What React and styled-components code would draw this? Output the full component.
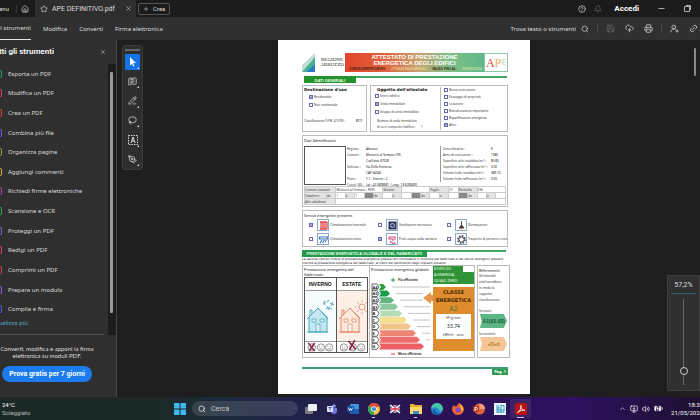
import React from "react";
import styled, { createGlobalStyle, css } from "styled-components";
// Icons
import {
  House,
  Star,
  X,
  Plus,
  Search,
  Save,
  CloudUpload,
  Printer,
  CircleQuestionMark,
  Bell,
  Minus,
  Link2,
  UserRoundPlus,
  MessageSquareText,
  PencilLine,
  Lasso,
  PenTool,
  ChevronUp,
  Volume2,
  MonitorDown,
  BatteryCharging,
} from "lucide-react";

const tools = [
  ["Esporta un PDF", "#1f9e7a"],
  ["Modifica un PDF", "#d8437c"],
  ["Crea un PDF", "#e0444c"],
  ["Combina più file", "#6a63f0"],
  ["Organizza pagine", "#8fa646"],
  ["Aggiungi commenti", "#e0b020"],
  ["Richiedi firme elettroniche", "#b8449e"],
  ["Scansione e OCR", "#2fa84f"],
  ["Proteggi un PDF", "#7a62e0"],
  ["Redigi un PDF", "#e03f74"],
  ["Comprimi un PDF", "#d8435c"],
  ["Prepara un modulo", "#8a5fd8"],
  ["Compila e firma", "#5a5ae8"],
];

const general = [
  ["Intero edificio", false],
  ["Unità immobiliare", true],
  ["Gruppo di unità immobiliari", false],
];

const reasons = [
  ["Nuova costruzione", false],
  ["Passaggio di proprietà", false],
  ["Locazione", false],
  ["Ristrutturazione importante", false],
  ["Riqualificazione energetica", false],
  ["Altro:", true],
];

const place = [
  ["Regione :", "Abruzzo"],
  ["Comune :", "Montorio al Vomano (TE)"],
  ["", "Cod.Istat: 67028"],
  ["Indirizzo :", "Via Della Fonterva"],
  ["", "CAP 64046"],
  ["Piano :", "T-1 - Interno : 2"],
  ["Coord. GIS :", "Lat : 42.5828681 ; Long : 13.6280490"],
];

const building = [
  ["Zona climatica :", "E"],
  ["Anno di costruzione :", "1980"],
  ["Superficie utile riscaldata (m²) :", "85.83"],
  ["Superficie utile raffrescata (m²) :", "0.00"],
  ["Volume lordo riscaldato (m³) :", "383.10"],
  ["Volume lordo raffrescato (m³) :", "0.00"],
];

const services = [
  ["Climatizzazione invernale", true, "radiator"],
  ["Ventilazione meccanica", false, "fan"],
  ["Illuminazione", false, "lamp"],
  ["Climatizzazione estiva", false, "cooler"],
  ["Prod. acqua calda sanitaria", true, "tap"],
  ["Trasporto di persone o cose", false, "gear"],
];

const classes = [
  ["A4", 14, "#2f9f3f"],
  ["A3", 18, "#159c4a"],
  ["A2", 22, "#63b582"],
  ["A1", 26, "#8cc8a0"],
  ["B", 30, "#b4dcb6"],
  ["C", 35, "#f6df8c"],
  ["D", 39, "#f3c48c"],
  ["E", 44, "#ee8676"],
  ["F", 48, "#ee6c6e"],
  ["G", 52, "#ee5f66"],
];

const ServiceIcon = ({ kind }) => (
  <svg width="11" height="11" viewBox="0 0 11 11" fill="none">
    {kind === "radiator" && (
      <path d="M2 2h7M2 9h7M3 2v7M5 2v7M7 2v7M9 2v7" stroke="#e0434b" strokeWidth="1.3" />
    )}
    {kind === "fan" && (
      <>
        <rect x="2" y="2" width="7" height="7" fill="#3b4570" stroke="#1e2848" />
        <circle cx="5.5" cy="5.5" r="2" stroke="#c6cde4" strokeWidth=".8" />
      </>
    )}
    {kind === "lamp" && (
      <>
        <path d="M5.5 1v4M3 8l2.5-3L8 8z" stroke="#333" fill="#333" strokeWidth=".8" />
        <circle cx="5.5" cy="8.5" r="1" fill="#d86a50" />
      </>
    )}
    {kind === "cooler" && (
      <path d="M1.5 3h8v2h-8zM2 9l2-3M4.5 9l2-3M7 8l1.5-2" stroke="#3877b8" strokeWidth="1.1" />
    )}
    {kind === "tap" && (
      <path d="M2 3h6v3M2 3v2h4v2M5 8a1.5 1.5 0 1 0 3 0M3 7l1 2" stroke="#d8457c" strokeWidth="1.1" />
    )}
    {kind === "gear" && (
      <>
        <circle cx="5.5" cy="5.5" r="3.6" stroke="#4a4f58" strokeWidth="1.8" strokeDasharray="1.6 1.2" />
        <circle cx="5.5" cy="5.5" r="2.6" stroke="#4a4f58" />
      </>
    )}
  </svg>
);

const HouseDrawing = ({ color, fill, winter }) => (
  <svg width="32" height="50" viewBox="0 0 32 50" fill="none" stroke={color}>
    <path d="M4 41V26l9-9 9 9v15z" fill={fill} />
    <path d="M2 28l11-11 10 11M5 25v-6h2v4" />
    <path d="M7 28h4v3H7zM15 28h4v3h-4zM11 33h4v8h-4z" strokeWidth=".8" fill="#fff" fillOpacity=".5" />
    <path d="M2 41h21" />
    {winter ? (
      <path
        d="M18 13l3-2M19 10l1 4M21 18l4-2M22 15l2 4M25 12l4 2M28 11l-2 4M22 11l2-2M24 17l3 1"
        strokeWidth="1.2"
        stroke="#7fb6c4"
      />
    ) : (
      <>
        <circle cx="25" cy="16" r="3" strokeWidth=".8" />
        <path
          d="M25 9v2M25 21v2M18 16h2M30 16h2M20 11l2 2M28 19l2 2M30 11l-2 2M20 21l2-2"
          strokeWidth=".7"
        />
      </>
    )}
  </svg>
);

const Faces = ({ cross }) => (
  <svg width="32" height="11" viewBox="0 0 32 11" fill="none" stroke="#555" strokeWidth=".7">
    {[6, 16, 25].map((x) => (
      <g key={x}>
        <circle cx={x} cy="6" r="4" fill="#fff" />
        <path d={`M${x - 2} 5h1M${x + 1} 5h1M${x - 2} 8q2-1 4 0`} />
      </g>
    ))}
    <path
      d={cross === 0 ? "M2 1l7 9M9 1l-6 9" : "M11-1l8 9M18-2l-6 11"}
      stroke="#8e1c38"
      strokeWidth="1.6"
    />
  </svg>
);

const EnergyScale = () => (
  <svg width="62" height="68" viewBox="0 0 62 68">
    {classes.map(([name, end, color], i) => {
      const y = 1 + i * 6.6;
      return (
        <g key={name}>
          <path d={`M1 ${y}h5l2 3-2 3H1z`} fill="#fff" stroke="#444" strokeWidth=".8" />
          <text x="1.5" y={y + 4.7} fontSize="4" fontWeight="700" fill="#222">
            {name}
          </text>
          <path d={`M8 ${y}H${end - 2}l3 3-3 3H8l2-3z`} fill={color} />
          {end < 50 && (
            <path d={`M${end + 7} ${y + 3}H${i === 1 || i === 2 ? 52 : 59}`} stroke="#999" strokeWidth=".6" />
          )}
        </g>
      );
    })}
    <path d="M62 12h-2V9l-8 6 8 6v-3h2z" fill="#e8974f" />
  </svg>
);

const RegionLogo = () => (
  <svg width="17" height="19" viewBox="0 0 17 19">
    <path d="M0 19V12L13 0v6z" fill="#c5ddd8" />
    <path d="M0 19L13 4v8L4 19z" fill="#48b292" />
    <path d="M4 19l9-8v8z" fill="#2b7bc8" />
  </svg>
);

const TaskIcon = ({ kind }) => (
  <svg width="12" height="12" viewBox="0 0 12 12">
    {kind === "views" && (
      <>
        <rect x="0" y="4" width="8" height="7" rx="1" fill="#777b86" />
        <rect x="3" y="1" width="9" height="7" rx="1" fill="#eceef2" />
      </>
    )}
    {kind === "teams" && (
      <>
        <circle cx="8" cy="3" r="1.8" fill="#8a8ff0" />
        <path d="M5 5h6v3a3 3 0 0 1-6 0z" fill="#7176dc" />
        <rect x="1" y="3" width="6" height="6" rx="1" fill="#dfe2fa" />
        <path d="M2.5 4.5h3M4 4.5v3" stroke="#4b50b0" />
      </>
    )}
    {kind === "word" && (
      <>
        <rect x="3" y="1" width="9" height="10" rx="1" fill="#3d96e0" />
        <path d="M3 6h9v4a1 1 0 0 1-1 1H3z" fill="#1c5fb4" />
        <rect x="0" y="3" width="7" height="6" rx="1" fill="#174e9c" />
        <path d="M1.5 4.5l1 3 1-2 1 2 1-3" stroke="#fff" strokeWidth=".8" fill="none" />
      </>
    )}
    {kind === "chrome" && (
      <>
        <circle cx="6" cy="6" r="6" fill="#f2c230" />
        <path d="M6 6L.8 3A6 6 0 0 1 11.2 3z" fill="#e2463a" />
        <path d="M6 6L.8 3A6 6 0 0 0 6 12z" fill="#35a853" />
        <circle cx="6" cy="6" r="2.8" fill="#fff" />
        <circle cx="6" cy="6" r="2.1" fill="#3f80ea" />
      </>
    )}
    {kind === "flag" && (
      <>
        <rect x="1" y="2" width="10" height="8" fill="#28387c" />
        <path d="M1 2l10 8M11 2L1 10" stroke="#fff" strokeWidth="1.5" />
        <path d="M6 2v8M1 6h10" stroke="#fff" strokeWidth="2.6" />
        <path d="M6 2v8M1 6h10" stroke="#d03048" strokeWidth="1.3" />
      </>
    )}
    {kind === "folder" && (
      <>
        <path d="M0 1h4l1 1h7v9H0z" fill="#e9ad2e" />
        <path d="M0 4h12v7H0z" fill="#fbd868" />
        <path d="M3 8h6v3H3z" fill="#3a87cc" />
      </>
    )}
    {kind === "edge" && (
      <>
        <circle cx="6" cy="6" r="6" fill="#2585d0" />
        <path d="M0 6a6 6 0 0 1 12 0c0 2-3 3-4 1 0-3-5-4-8-1z" fill="#44c7a4" />
        <path d="M4 7c0 3 3 4 6 3-3 3-8 1-8-2 0-1 1-2 2-1z" fill="#164f9a" />
      </>
    )}
    {kind === "firefox" && (
      <>
        <path d="M6 12a6 6 0 0 1-5.5-8L2 2l2 2 3-4c4 2 5 5 5 6a6 6 0 0 1-6 6z" fill="#f0642f" />
        <path d="M8 1c3 3 4 5 2 8 0-3-2-5-2-8z" fill="#fbc83c" />
        <circle cx="6" cy="7" r="2.5" fill="#8247c8" />
      </>
    )}
    {kind === "powerpoint" && (
      <>
        <circle cx="6.5" cy="6" r="5.5" fill="#e0663e" />
        <path d="M6.5 .5A5.5 5.5 0 0 1 12 6H6.5z" fill="#f39a78" />
        <rect x="0" y="3" width="6" height="6" rx="1" fill="#b93d1e" />
        <path d="M2 8V4.5h1.5a1 1 0 0 1 0 2H2" stroke="#fff" strokeWidth=".8" fill="none" />
      </>
    )}
    {kind === "sheet" && (
      <>
        <path d="M0 0h12v12H0z" fill="#e8f6fb" />
        <path d="M2 3h3M2 5h4M2 7h8M2 9h8M4 4v6M7 2v8M7 2.5h3v7" stroke="#3a9cc0" fill="none" />
      </>
    )}
    {kind === "acrobat" && (
      <>
        <rect width="12" height="12" rx="2" fill="#b81414" />
        <path
          d="M2.5 9.5c2-1 4-4 3.5-7-1 2 2 5 4 5-2-1-5 0-7.5 2z"
          fill="none"
          stroke="#fff"
          strokeWidth=".9"
        />
      </>
    )}
  </svg>
);

const Check = ({ label, checked }) => (
  <CheckLabel>
    <Box type="checkbox" defaultChecked={checked} />
    {label}
  </CheckLabel>
);

const Header = () => (
  <>
    <TitleBar>
      <MenuButton>Menu</MenuButton>
      <HomeButton aria-label="Home">
        <House size={8} />
      </HomeButton>
      <FileTab>
        <Star size={8} />
        <span>APE DEFINITIVO.pdf</span>
        <IconButton aria-label="Chiudi scheda">
          <X size={7} />
        </IconButton>
      </FileTab>
      <CreateButton>
        <Plus size={6} />
        Crea
      </CreateButton>
      <WindowTools>
        <IconButton aria-label="Guida">
          <CircleQuestionMark size={8} />
        </IconButton>
        <IconButton aria-label="Notifiche" $dim>
          <Bell size={8} />
        </IconButton>
        <SignIn>Accedi</SignIn>
        <IconButton aria-label="Riduci">
          <Minus size={9} />
        </IconButton>
        <IconButton aria-label="Ripristina">
          <svg width="7" height="7" viewBox="0 0 7 7" fill="none" stroke="currentColor">
            <path d="M.5 1.5h5v5h-5zM2 .5h4.5V5" strokeWidth=".8" />
          </svg>
        </IconButton>
      </WindowTools>
    </TitleBar>
    <Toolbar>
      <Nav>
        <NavLink href="#strumenti" $active>
          Tutti gli strumenti
        </NavLink>
        <NavLink href="#modifica">Modifica</NavLink>
        <NavLink href="#converti">Converti</NavLink>
        <NavLink href="#firma">Firma elettronica</NavLink>
      </Nav>
      <FindButton>
        Trova testo o strumenti
        <Search size={8} />
      </FindButton>
      <Separator />
      <IconButton aria-label="Salva" $dim>
        <Save size={9} />
      </IconButton>
      <IconButton aria-label="Carica">
        <CloudUpload size={9} />
      </IconButton>
      <IconButton aria-label="Stampa">
        <Printer size={9} />
      </IconButton>
      <Separator />
      <IconButton aria-label="Invita">
        <UserRoundPlus size={9} />
      </IconButton>
      <IconButton aria-label="Collegamento">
        <Link2 size={9} transform="rotate(-45)" />
      </IconButton>
    </Toolbar>
  </>
);

const Sidebar = () => (
  <Panel>
    <PanelHeader>
      <PanelTitle>Tutti gli strumenti</PanelTitle>
      <IconButton aria-label="Chiudi">
        <X size={6} />
      </IconButton>
    </PanelHeader>
    <PanelBody>
      <ToolColumn>
        <ToolList>
          {tools.map(([name, color]) => (
            <ToolItem key={name}>
              <ToolButton>
                <ToolMark $color={color} />
                {name}
              </ToolButton>
            </ToolItem>
          ))}
        </ToolList>
        <MoreLink href="#altro">Visualizza più</MoreLink>
      </ToolColumn>
      <PanelTrack>
        <PanelThumb />
      </PanelTrack>
    </PanelBody>
    <PanelFooter>
      <p>
        Converti, modifica e apponi la firma
        <br />
        elettronica su moduli PDF.
      </p>
      <TrialButton>Prova gratis per 7 giorni</TrialButton>
    </PanelFooter>
  </Panel>
);

const QuickTools = () => (
  <QuickBar>
    <Handle />
    <QuickButton aria-label="Seleziona" $active>
      <svg width="10" height="10" viewBox="0 0 10 10" fill="#fff">
        <path d="M2 0l6 6-3 .2L6.5 9l-1.3.6L4 6.8 2 8.5z" />
      </svg>
    </QuickButton>
    <QuickButton aria-label="Commenta">
      <MessageSquareText size={9} />
    </QuickButton>
    <QuickButton aria-label="Disegna">
      <PencilLine size={9} />
    </QuickButton>
    <QuickButton aria-label="Forma">
      <Lasso size={9} />
    </QuickButton>
    <QuickButton aria-label="Testo">
      <svg width="10" height="10" viewBox="0 0 10 10" fill="none" stroke="currentColor">
        <rect x=".5" y=".5" width="9" height="9" strokeDasharray="1.5 1" />
        <path d="M3 8l2-6 2 6M3.7 6h2.6" />
      </svg>
    </QuickButton>
    <QuickButton aria-label="Firma">
      <PenTool size={9} />
    </QuickButton>
  </QuickBar>
);

const Certificate = () => (
  <Sheet>
    <DocHeader>
      <RegionLogo />
      <Region>
        REGIONE
        <br />
        ABRUZZO
      </Region>
      <Banner>
        <h1>
          ATTESTATO DI PRESTAZIONE
          <br />
          ENERGETICA DEGLI EDIFICI
        </h1>
        <BannerCodes>
          <b>CODICE IDENTIFICATIVO:</b>
          <span>2700413000385052</span>
          <b>VALIDO FINO AL:</b>
          <span>16/05/2034</span>
        </BannerCodes>
      </Banner>
      <ApeLogo>
        <i>A</i>
        <i>P</i>
        <i>E</i>
      </ApeLogo>
    </DocHeader>
    <GreenRule $inset>
      <GreenTitle $short>DATI GENERALI</GreenTitle>
    </GreenRule>
    <GeneralRow>
      <Card>
        <Heading>Destinazione d'uso</Heading>
        <UseList>
          <Check label="Residenziale" checked />
          <Check label="Non residenziale" />
        </UseList>
        <Classification>
          <span>Classificazione D.P.R. 412/93 :</span>
          <b>E1.1</b>
        </Classification>
      </Card>
      <Card $split>
        <ObjectColumn>
          <Heading>Oggetto dell'attestato</Heading>
          {general.map(([label, on]) => (
            <Check key={label} label={label} checked={on} />
          ))}
          <Units>
            Numero di unità immobiliari
            <br />
            di cui è composto l'edificio : &nbsp; &nbsp; &nbsp; 1
          </Units>
        </ObjectColumn>
        <ReasonColumn>
          {reasons.map(([label, on]) => (
            <Check key={label} label={label} checked={on} />
          ))}
        </ReasonColumn>
      </Card>
    </GeneralRow>
    <Identity>
      <Heading $light>Dati Identificativi</Heading>
      <IdentityRow>
        <Photo />
        <Facts>
          {place.map(([name, value]) => (
            <React.Fragment key={value}>
              <dt>{name}</dt>
              <dd>{value}</dd>
            </React.Fragment>
          ))}
        </Facts>
        <Facts $right>
          {building.map(([name, value]) => (
            <React.Fragment key={name}>
              <dt>{name}</dt>
              <dd>{value}</dd>
            </React.Fragment>
          ))}
        </Facts>
      </IdentityRow>
      <Cadastre>
        <colgroup>
          <FirstCol />
          <col span={19} />
        </colgroup>
        <tbody>
          <tr>
            <th colSpan={2}>Comune catastale</th>
            <td colSpan={5}>Montorio al Vomano - F690</td>
            <th colSpan={2}>Sezione</th>
            <td colSpan={3} />
            <th colSpan={2}>Foglio</th>
            <td>27</td>
            <th colSpan={2}>Particella</th>
            <td colSpan={3}>136</td>
          </tr>
          <tr>
            <th>Subalterni</th>
            {["da", "1", "a", "1", null, "da", "", "a", "", null, "da", "", "a", "", null, "da", "", "a", ""].map(
              (cell, i) =>
                cell === "da" || cell === "a" ? (
                  <th key={i}>{cell}</th>
                ) : (
                  <Cell key={i} $dark={cell === null}>
                    {cell}
                  </Cell>
                )
            )}
          </tr>
          <tr>
            <th colSpan={2}>Altri subalterni</th>
            <td colSpan={18} />
          </tr>
        </tbody>
      </Cadastre>
    </Identity>
    <Services>
      <Heading $light>Servizi energetici presenti</Heading>
      <ServiceGrid>
        {services.map(([label, on, kind]) => (
          <ServiceLabel key={label}>
            <Box type="checkbox" defaultChecked={on} />
            <ServiceBadge>
              <ServiceIcon kind={kind} />
            </ServiceBadge>
            {label}
          </ServiceLabel>
        ))}
      </ServiceGrid>
    </Services>
    <GreenRule>
      <GreenTitle>PRESTAZIONE ENERGETICA GLOBALE E DEL FABBRICATO</GreenTitle>
    </GreenRule>
    <Intro>
      La sezione riporta l'indice di prestazione energetica globale non rinnovabile in funzione del
      fabbricato e dei servizi energetici presenti,
      <br />
      nonché la prestazione energetica del fabbricato, al netto del rendimento degli impianti
      presenti.
    </Intro>
    <Performance>
      <Building>
        <Heading $light>
          Prestazione energetica del
          <br />
          fabbricato
        </Heading>
        <Seasons>
          <Season>
            <h3>INVERNO</h3>
            <HouseDrawing color="#4fa9bd" fill="#c4e6f0" winter />
            <Faces cross={0} />
          </Season>
          <Season $summer>
            <h3>ESTATE</h3>
            <HouseDrawing color="#e08a70" fill="#fde8dc" />
            <Faces cross={1} />
          </Season>
        </Seasons>
      </Building>
      <Global>
        <ScaleColumn>
          <Heading $light>Prestazione energetica globale</Heading>
          <Efficiency>
            <Plus size={6} color="#2b9a50" strokeWidth={4} />
            Più efficiente
          </Efficiency>
          <EnergyScale />
          <Efficiency>
            <Minus size={6} color="#e0434b" strokeWidth={4} />
            Meno efficiente
          </Efficiency>
        </ScaleColumn>
        <ClassColumn>
          <NearZero>
            <span>
              EDIFICIO
              <br />A ENERGIA
              <br />
              QUASI ZERO
            </span>
            <ZeroBox />
          </NearZero>
          <ClassBox>
            <ClassName>
              CLASSE
              <br />
              ENERGETICA
            </ClassName>
            <Grade>A2</Grade>
            <Value>
              <span>EP gl,nren</span>
              <b>33.74</b>
              <span>kWh/m² &nbsp; anno</span>
            </Value>
          </ClassBox>
        </ClassColumn>
      </Global>
      <References>
        <Heading $light>Riferimenti</Heading>
        <p>
          Gli immobili
          <br />
          simili avrebbero
          <br />
          in media la
          <br />
          seguente
          <br />
          classificazione:
        </p>
        <span>Se nuovi:</span>
        <RefTag $color="#5cb585">A1(93.93)</RefTag>
        <span>Se esistenti:</span>
        <RefTag $color="#f5c69a" $orange>
          «D»d
        </RefTag>
      </References>
    </Performance>
    <DocFooter>
      <PageNumber>Pag. 1</PageNumber>
    </DocFooter>
  </Sheet>
);

const Taskbar = () => (
  <Bar>
    <Weather>
      24°C
      <br />
      <span>Soleggiato</span>
    </Weather>
    <Apps>
      <StartButton aria-label="Start">
        <svg width="12" height="12" viewBox="0 0 12 12" fill="#3fb8ee">
          <path d="M0 0h5.5v5.5H0zM6.5 0H12v5.5H6.5zM0 6.5h5.5V12H0zM6.5 6.5H12V12H6.5z" />
        </svg>
      </StartButton>
      <SearchBox>
        <Search size={8} />
        <input type="text" placeholder="Cerca" aria-label="Cerca" />
      </SearchBox>
      {[
        "views",
        "teams",
        "word",
        "chrome",
        "flag",
        "folder",
        "edge",
        "firefox",
        "powerpoint",
        "sheet",
        "acrobat",
      ].map((kind) => (
        <AppButton
          key={kind}
          aria-label={kind}
          $running={kind === "chrome" || kind === "folder"}
          $current={kind === "acrobat"}
        >
          <TaskIcon kind={kind} />
        </AppButton>
      ))}
    </Apps>
    <Tray>
      <ChevronUp size={7} />
      <MonitorDown size={8} />
      <Volume2 size={8} />
      <BatteryCharging size={9} fill="#fff" />
      <Clock>
        18:32
        <br />
        21/05/2024
      </Clock>
    </Tray>
  </Bar>
);

const App = () => {
  return (
    <Window>
      <GlobalStyle />
      <Header />
      <Main>
        <Sidebar />
        <Viewer>
          <QuickTools />
          <Certificate />
          <ViewerTrack>
            <ViewerThumb />
          </ViewerTrack>
          <ZoomPanel>
            <output htmlFor="zoom">57,2%</output>
            <ZoomSlider id="zoom" type="range" min="0" max="100" defaultValue="13" aria-label="Zoom" />
          </ZoomPanel>
        </Viewer>
      </Main>
      <Taskbar />
    </Window>
  );
};

const GlobalStyle = createGlobalStyle`
  * {
    margin: 0;
    padding: 0;
    box-sizing: border-box;
  }
  body {
    background: #1e1e1e;
    font-family: Roboto, "Liberation Sans", sans-serif;
    font-size: 7px;
    line-height: 8px;
    color: #dcdcdc;
  }
  button, input {
    font: inherit;
    color: inherit;
    border: none;
    background: none;
  }
  a {
    color: inherit;
    text-decoration: none;
  }
  svg {
    display: block;
    flex-shrink: 0;
  }
`;

const Window = styled.div`
  display: flex;
  flex-direction: column;
  height: 100vh;
  overflow: hidden;
`;

// Title bar
const TitleBar = styled.header`
  display: flex;
  align-items: center;
  height: 17px;
  background: #1b1b1b;
`;

const MenuButton = styled.button`
  display: flex;
  justify-content: flex-end;
  width: 9px;
  overflow: hidden;
  font-size: 6px;
`;

const HomeButton = styled.button`
  display: flex;
  margin-left: 7px;
  padding: 0 6px 0 4px;
  border-left: 1px solid #333;
`;

const FileTab = styled.div`
  display: flex;
  align-items: center;
  gap: 4px;
  width: 101px;
  height: 17px;
  padding: 0 4px 0 5px;
  background: #2e2e2e;
  white-space: nowrap;
  span {
    flex: 1;
  }
`;

const CreateButton = styled.button`
  display: flex;
  align-items: center;
  gap: 4px;
  height: 12px;
  margin-left: 2px;
  padding: 0 4px;
  border: 1px solid #555;
  border-radius: 2px;
  font-size: 6px;
`;

const IconButton = styled.button`
  display: flex;
  align-items: center;
  justify-content: center;
  color: ${(props) => (props.$dim ? "#666" : "#d6d6d6")};
`;

const WindowTools = styled.div`
  display: flex;
  align-items: center;
  gap: 8px;
  margin-left: auto;
  padding-right: 9px;
  ${IconButton}:nth-of-type(n + 4) {
    margin-left: 10px;
  }
`;

const SignIn = styled.button`
  margin-left: 4px;
  font-size: 8px;
  font-weight: 700;
  color: #fff;
`;

// Toolbar
const Toolbar = styled.div`
  display: flex;
  align-items: center;
  gap: 10px;
  height: 23px;
  padding-right: 2px;
  background: #303030;
  font-family: "Noto Sans", sans-serif;
  font-size: 6px;
`;

const Nav = styled.nav`
  display: flex;
  align-self: stretch;
  gap: 12px;
  margin-right: auto;
`;

const NavLink = styled.a`
  display: flex;
  align-items: center;
  white-space: nowrap;
  ${(props) =>
    props.$active &&
    css`
      justify-content: flex-end;
      width: 31px;
      overflow: hidden;
      border-bottom: 1px solid #e6e6e6;
    `}
`;

const FindButton = styled.button`
  display: flex;
  align-items: center;
  gap: 5px;
`;

const Separator = styled.span`
  width: 1px;
  height: 8px;
  margin: 0 -2px;
  background: #4a4a4a;
`;

const Main = styled.main`
  display: flex;
  flex: 1;
  min-height: 0;
`;

// Tool panel
const Panel = styled.aside`
  display: flex;
  flex-direction: column;
  width: 117px;
  background: #2f2f2f;
  border-right: 1px solid #484848;
`;

const PanelHeader = styled.div`
  display: flex;
  align-items: center;
  justify-content: space-between;
  height: 24px;
  padding-right: 10px;
`;

const PanelTitle = styled.h2`
  display: flex;
  justify-content: flex-end;
  width: 54px;
  overflow: hidden;
  font-size: 8px;
  line-height: 10px;
  white-space: nowrap;
  color: #f2f2f2;
`;

const PanelBody = styled.div`
  display: flex;
  flex: 1;
  gap: 4px;
  min-height: 0;
  font-family: "Noto Sans", sans-serif;
  font-size: 6px;
`;

const ToolColumn = styled.div`
  display: flex;
  flex: 1;
  flex-direction: column;
  padding-bottom: 7px;
  border-bottom: 1px solid #555;
`;

const ToolList = styled.ul`
  display: flex;
  flex: 1;
  flex-direction: column;
  list-style: none;
`;

const ToolItem = styled.li`
  display: flex;
  flex: 1;
  align-items: center;
`;

const ToolButton = styled.button`
  display: flex;
  align-items: center;
  gap: 6px;
  white-space: nowrap;
`;

const ToolMark = styled.span`
  width: 2px;
  height: 8px;
  border: 1px solid ${(props) => props.$color};
  border-left: none;
  border-radius: 0 2px 2px 0;
`;

const MoreLink = styled.a`
  display: flex;
  justify-content: flex-end;
  width: 28px;
  overflow: hidden;
  white-space: nowrap;
  color: #5cb4cf;
`;

const PanelTrack = styled.div`
  width: 8px;
  padding: 8px 3px 22px 2px;
  background: #1c1c1c;
`;

const PanelThumb = styled.div`
  height: 100%;
  border-radius: 1px;
  background: #9a9a9a;
`;

const PanelFooter = styled.div`
  display: flex;
  flex-direction: column;
  align-items: center;
  gap: 7px;
  height: 62px;
  padding: 10px 22px 0 0;
  p {
    font-family: Lato, sans-serif;
    font-size: 6px;
    line-height: 7px;
    text-align: center;
    white-space: nowrap;
  }
`;

const TrialButton = styled.button`
  height: 16px;
  padding: 0 7px;
  border-radius: 8px;
  background: #1d7bf0;
  font-weight: 700;
  white-space: nowrap;
  color: #fff;
`;

// Viewer
const Viewer = styled.section`
  position: relative;
  display: flex;
  flex: 1;
  justify-content: center;
  min-width: 0;
  padding-bottom: 3px;
  background: #1e1e1e;
`;

const QuickBar = styled.div`
  position: absolute;
  top: 5px;
  left: 5px;
  display: flex;
  flex-direction: column;
  align-items: center;
  width: 21px;
  height: 125px;
  padding: 3px 0 0;
  border: 1px solid #3c3c3c;
  border-radius: 3px;
  background: #2e2e2e;
`;

const Handle = styled.span`
  width: 15px;
  height: 2px;
  margin-bottom: 1px;
  background: #666;
`;

const QuickButton = styled.button`
  position: relative;
  display: flex;
  flex: 1;
  align-items: center;
  justify-content: center;
  width: 15px;
  color: #d6d6d6;
  background: ${(props) =>
    props.$active
      ? "linear-gradient(#1473e6, #1473e6) center / 15px 16px no-repeat"
      : "none"};
  &::after {
    content: "";
    position: absolute;
    right: 1px;
    bottom: 3px;
    border: 1px solid #e6e6e6;
    border-top-color: transparent;
    border-left-color: transparent;
  }
`;

const ViewerTrack = styled.div`
  width: 9px;
  margin-left: auto;
  padding: 8px 4px 0 3px;
`;

const ViewerThumb = styled.div`
  height: 28px;
  border-radius: 1px;
  background: #8a8a8a;
`;

const ZoomPanel = styled.div`
  position: absolute;
  right: 0;
  bottom: 6px;
  display: flex;
  flex-direction: column;
  align-items: center;
  width: 33px;
  height: 116px;
  padding-top: 5px;
  border: 1px solid #3e3e3e;
  background: #303030;
  output {
    width: 25px;
    padding-bottom: 4px;
    border-bottom: 1px solid #2f5f78;
    text-align: center;
  }
`;

const ZoomSlider = styled.input`
  flex: 1;
  width: 9px;
  min-height: 0;
  margin: 5px 0;
  appearance: none;
  writing-mode: vertical-lr;
  direction: rtl;
  background: linear-gradient(#6a6a6a, #6a6a6a) center / 1px 100% no-repeat;
  &::-webkit-slider-thumb {
    appearance: none;
    width: 8px;
    height: 8px;
    border: 1px solid #d0d0d0;
    border-radius: 50%;
    background: #303030;
  }
`;

// Certificate
const Sheet = styled.article`
  flex: 0 1 252px;
  min-width: 0;
  margin-left: auto;
  padding: 13px 22px 0 24px;
  background: #fff;
  font-family: "Noto Sans", sans-serif;
  font-size: 3px;
  line-height: 4px;
  color: #333;
`;

const DocHeader = styled.header`
  display: flex;
  height: 19px;
`;

const Region = styled.p`
  flex: 1;
  padding-top: 4px;
  font-family: "Liberation Serif", serif;
  font-size: 5px;
  line-height: 5px;
  text-align: center;
  color: #222;
`;

const Banner = styled.div`
  width: 139px;
  background: linear-gradient(90deg, #e2452c 0, #e0603c 28%, #c9a070 52%, #7fbf86 75%, #5fb98a 100%);
  text-align: center;
  h1 {
    padding-top: 1px;
    font-family: "Liberation Sans", sans-serif;
    font-size: 6px;
    line-height: 6px;
    white-space: nowrap;
    color: #fff;
  }
`;

const BannerCodes = styled.p`
  display: flex;
  justify-content: space-between;
  padding: 1px 2px 0 4px;
  font-family: "Liberation Sans", sans-serif;
  font-size: 4px;
  line-height: 4px;
  white-space: nowrap;
  b {
    font-size: 3px;
    color: #3c1c10;
  }
  span {
    color: #f6f0a8;
  }
`;

const ApeLogo = styled.p`
  display: flex;
  justify-content: center;
  width: 24px;
  border: 1px solid #8cc8a4;
  font-family: "Liberation Serif", serif;
  font-size: 12px;
  line-height: 18px;
  i {
    font-style: normal;
    color: #d8503c;
  }
  i:nth-child(2) {
    color: #e8b070;
  }
  i:nth-child(3) {
    font-size: 8px;
    color: #b4d890;
  }
`;

const GreenRule = styled.div`
  height: 7px;
  margin: ${(props) => (props.$inset ? "4px 1px 2px 2px" : "3px 2px 0 0")};
  background: linear-gradient(#3fa465, #3fa465) top / 100% 2px no-repeat;
`;

const GreenTitle = styled.h2`
  width: ${(props) => (props.$short ? "52px" : "125px")};
  padding-top: ${(props) => (props.$short ? "2px" : "1px")};
  background: ${(props) => (props.$short ? "#25932c" : "#22994c")};
  font-family: "Liberation Sans", sans-serif;
  font-size: 4px;
  line-height: 5px;
  height: 7px;
  text-align: center;
  white-space: nowrap;
  color: #e6ffe6;
`;

const GeneralRow = styled.div`
  display: flex;
  gap: 3px;
  min-height: 46px;
`;

const Card = styled.section`
  border: 1px solid #bbb;
  padding: 1px;
  ${(props) =>
    props.$split
      ? css`
          display: flex;
          flex: 1;
        `
      : css`
          display: flex;
          flex-direction: column;
          width: 65px;
        `}
`;

const Heading = styled.h3`
  font-family: ${(props) => (props.$light ? '"Noto Sans"' : '"DejaVu Sans"')}, sans-serif;
  font-size: 4px;
  font-weight: ${(props) => (props.$light ? 400 : 700)};
  line-height: 5px;
  white-space: nowrap;
  color: #111;
`;

const CheckLabel = styled.label`
  display: flex;
  align-items: center;
  gap: 1px;
  white-space: nowrap;
`;

const Box = styled.input`
  flex-shrink: 0;
  width: 4px;
  height: 4px;
  appearance: none;
  border: 1px solid #6a6ab0;
  &:checked {
    background: #a4a4d0;
  }
`;

const UseList = styled.div`
  display: flex;
  flex-direction: column;
  gap: 4px;
  padding: 3px 0 0 5px;
`;

const Classification = styled.p`
  display: flex;
  justify-content: space-between;
  margin-top: auto;
  padding: 0 3px 7px 0;
`;

const ObjectColumn = styled.div`
  display: flex;
  flex-direction: column;
  gap: 4px;
  width: 69px;
  padding-left: 3px;
  border-right: 1px solid #bbb;
  ${Heading} {
    margin: 0 0 -2px 2px;
  }
`;

const Units = styled.p`
  padding-left: 2px;
  line-height: 6px;
  white-space: nowrap;
`;

const ReasonColumn = styled.div`
  display: flex;
  flex-direction: column;
  gap: 3px;
  padding: 1px 0 0 3px;
`;

const Identity = styled.section`
  min-height: 72px;
  margin-top: 3px;
  padding: 2px 1px 0;
  border: 1px solid #bbb;
`;

const IdentityRow = styled.div`
  display: flex;
  padding: 3px 0 1px;
`;

const Photo = styled.div`
  width: 42px;
  height: 39px;
  margin-right: 1px;
  border: 1px solid #555;
`;

const Facts = styled.dl`
  display: grid;
  grid-template-columns: ${(props) => (props.$right ? "48px 1fr" : "19px 1fr")};
  grid-auto-rows: 6px;
  align-content: start;
  white-space: nowrap;
  ${(props) =>
    props.$right
      ? css`
          flex: 1;
          height: 36px;
          padding-left: 2px;
          border-left: 1px solid #999;
        `
      : css`
          width: 93px;
          height: 39px;
        `}
  dt, dd {
    padding-top: 1px;
  }
  dd {
    color: #111;
  }
`;

const Cadastre = styled.table`
  width: 100%;
  table-layout: fixed;
  border-collapse: collapse;
  th, td {
    height: 6px;
    border: 1px solid #ccc;
    font-weight: 400;
    line-height: 4px;
    text-align: left;
    white-space: nowrap;
  }
  th {
    background: #e4e4e4;
  }
`;

const FirstCol = styled.col`
  width: 22px;
`;

const Cell = styled.td`
  background: ${(props) => (props.$dark ? "#888" : "none")};
`;

const Services = styled.section`
  min-height: 37px;
  margin-top: 3px;
  padding: 2px 1px 0;
  border: 1px solid #bbb;
`;

const ServiceGrid = styled.div`
  display: grid;
  grid-template-columns: 69px 69px 1fr;
  row-gap: 2px;
  padding: 1px 0 0 5px;
`;

const ServiceLabel = styled.label`
  display: flex;
  align-items: center;
  gap: 1px;
  white-space: nowrap;
  ${Box} {
    margin-right: 3px;
  }
`;

const ServiceBadge = styled.span`
  display: flex;
  align-items: center;
  justify-content: center;
  width: 12px;
  height: 12px;
  border: 1px solid #8ea6cc;
  overflow: hidden;
`;

const Intro = styled.p`
  font-family: "DejaVu Sans", sans-serif;
  white-space: nowrap;
  color: #111;
`;

const Performance = styled.section`
  display: flex;
  min-height: 93px;
  margin-right: -2px;
`;

const Building = styled.div`
  width: 68px;
  padding: 1px 1px 3px;
  border: 1px solid #bbb;
`;

const Seasons = styled.div`
  display: flex;
  border: 1px solid #555;
`;

const Season = styled.div`
  flex: 1;
  min-width: 0;
  overflow: hidden;
  background: ${(props) => (props.$summer ? "#fdeee6" : "#f6fbfd")};
  & + & {
    border-left: 1px solid #555;
  }
  h3 {
    height: 13px;
    border-bottom: 1px solid #999;
    background: #fff;
    font-family: "Liberation Sans", sans-serif;
    font-size: 5px;
    line-height: 13px;
    text-align: center;
    color: #111;
  }
  svg:last-child {
    overflow: visible;
    background: #fff;
    border-top: 1px solid #999;
  }
`;

const Global = styled.div`
  display: flex;
  width: 105px;
  border: 1px solid #bbb;
  border-left: none;
`;

const ScaleColumn = styled.div`
  display: flex;
  flex: 1;
  flex-direction: column;
  padding: 1px 0 0 1px;
  ${Heading} {
    margin-bottom: 5px;
  }
`;

const Efficiency = styled.p`
  display: flex;
  align-items: center;
  gap: 2px;
  height: 6px;
  padding-left: 19px;
  font-weight: 700;
  white-space: nowrap;
`;

const ClassColumn = styled.div`
  width: 41px;
`;

const NearZero = styled.div`
  display: flex;
  justify-content: space-between;
  align-items: flex-start;
  height: 18px;
  margin-bottom: 3px;
  padding-left: 1px;
  background: #2f9435;
  font-size: 4px;
  line-height: 6px;
  white-space: nowrap;
  color: #e6ffe6;
`;

const ZeroBox = styled.span`
  width: 11px;
  height: 6px;
  background: #fff;
`;

const ClassBox = styled.div`
  height: 64px;
  padding-top: 1px;
  background: #df8c2e;
  text-align: center;
`;

const ClassName = styled.p`
  font-family: "DejaVu Sans", sans-serif;
  font-size: 5px;
  font-weight: 700;
  line-height: 8px;
  white-space: nowrap;
  color: #4a2a08;
`;

const Grade = styled.p`
  font-size: 7px;
  line-height: 9px;
  color: #3f7a2a;
`;

const Value = styled.div`
  display: flex;
  flex-direction: column;
  justify-content: space-around;
  height: 25px;
  margin: 1px 3px 0;
  background: #fff;
  b {
    font-size: 5px;
    font-weight: 400;
    line-height: 6px;
    color: #111;
  }
`;

const References = styled.div`
  flex: 1;
  margin-left: 2px;
  padding: 2px 1px 0;
  border: 1px solid #bbb;
  white-space: nowrap;
  p {
    margin-bottom: 6px;
    line-height: 6px;
  }
  span {
    display: block;
  }
`;

const RefTag = styled.strong`
  display: block;
  height: 14px;
  margin: 1px 1px 4px;
  background: ${(props) => props.$color};
  clip-path: polygon(0 0, 88% 0, 100% 50%, 88% 100%, 0 100%, 6% 50%);
  font-family: "Liberation Sans", sans-serif;
  font-size: 5px;
  line-height: 14px;
  text-align: center;
  color: ${(props) => (props.$orange ? "#b8801c" : "#1c5a34")};
`;

const DocFooter = styled.footer`
  display: flex;
  justify-content: flex-end;
  margin-top: 9px;
  border-top: 2px solid #3f9e78;
`;

const PageNumber = styled.span`
  padding: 0 2px;
  background: #2f9a52;
  font-size: 4px;
  font-weight: 700;
  line-height: 6px;
  color: #fff;
`;

// Taskbar
const Bar = styled.footer`
  display: flex;
  align-items: center;
  height: 23px;
  background: linear-gradient(
    90deg,
    #1b2a27 0,
    #1b2926 22%,
    #1c2a3c 32%,
    #21214c 45%,
    #2b1154 62%,
    #2e1160 82%,
    #1d1030 100%
  );
  color: #fff;
`;

const Weather = styled.p`
  flex: 1 1 0;
  padding-left: 2px;
  font-size: 6px;
  span {
    color: #b4bab8;
  }
`;

const Apps = styled.div`
  display: flex;
  align-items: center;
`;

const StartButton = styled.button`
  margin-right: 6px;
`;

const SearchBox = styled.label`
  display: flex;
  align-items: center;
  gap: 5px;
  width: 106px;
  height: 15px;
  margin-right: 2px;
  padding: 0 6px;
  border-radius: 8px;
  background: #ffffff1f;
  input {
    flex: 1;
    min-width: 0;
    outline: none;
  }
  input::placeholder {
    color: #c8ccd0;
  }
`;

const AppButton = styled.button`
  position: relative;
  display: flex;
  align-items: center;
  justify-content: center;
  width: 21px;
  height: 19px;
  border-radius: 2px;
  background: ${(props) => (props.$current ? "#ffffff14" : "none")};
  &::after {
    content: "";
    position: absolute;
    bottom: 0;
    width: ${(props) => (props.$current ? "7px" : "3px")};
    height: 1px;
    background: ${(props) => (props.$current || props.$running ? "#d4c4ee" : "none")};
  }
`;

const Tray = styled.div`
  display: flex;
  flex: 1 1 0;
  align-items: center;
  justify-content: flex-end;
  gap: 4px;
  margin-right: -3px;
`;

const Clock = styled.p`
  padding-left: 4px;
  font-size: 6px;
  text-align: right;
  white-space: nowrap;
`;

export default App;
